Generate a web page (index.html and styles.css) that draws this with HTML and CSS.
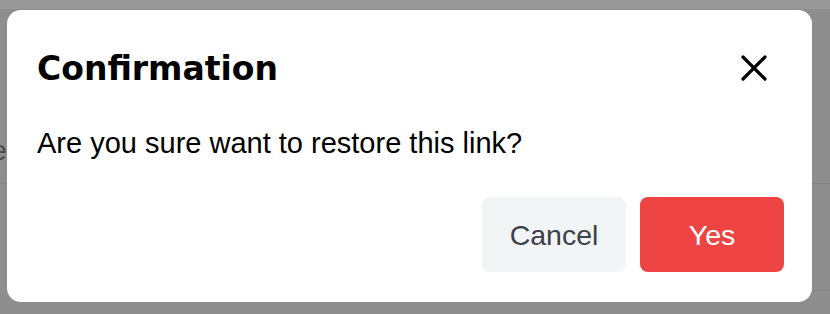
FILE: index.html
```html
<!DOCTYPE html>
<html>
<head>
<meta charset="utf-8">
<link rel="stylesheet" href="styles.css">
</head>
<body>
<div class="page">
  <div class="topbar"></div>
  <div class="bg-row">
    <span class="bg-text">Type</span>
  </div>
  <div class="bg-line line-1"></div>
  <div class="bg-line line-2"></div>
</div>
<div class="overlay">
  <div class="modal">
    <div class="modal-header">
      <h2 class="title">Confirmation</h2>
      <button class="close" aria-label="Close">
        <svg width="26" height="26" viewBox="0 0 26 26"><path d="M2 2 L24 24 M24 2 L2 24" stroke="#000" stroke-width="3.2" stroke-linecap="round" fill="none"/></svg>
      </button>
    </div>
    <p class="message">Are you sure want to restore this link?</p>
    <div class="actions">
      <button class="btn btn-cancel">Cancel</button>
      <button class="btn btn-yes">Yes</button>
    </div>
  </div>
</div>
</body>
</html>
```
FILE: styles.css
```css
html, body {
  margin: 0;
  padding: 0;
}
body {
  width: 830px;
  height: 314px;
  overflow: hidden;
  background: #8e8e8e;
  position: relative;
  font-family: "Liberation Sans", Arial, sans-serif;
}
.page {
  position: relative;
  width: 830px;
  height: 314px;
}
.topbar {
  height: 9px;
  background: #999999;
}
.bg-row {
  height: 174px;
  display: flex;
  align-items: center;
  padding-top: 110px;
  box-sizing: border-box;
}
.bg-text {
  font-size: 28px;
  color: #4a4a4a;
  margin-left: -54px;
}
.bg-line {
  position: absolute;
  left: 0;
  right: 0;
  height: 1px;
  background: #838383;
}
.line-1 { top: 183px; }
.line-2 { top: 290px; left: 812px; }
.overlay {
  position: absolute;
  inset: 0;
}
.modal {
  position: absolute;
  left: 7px;
  top: 10px;
  width: 805px;
  height: 292px;
  box-sizing: border-box;
  background: #ffffff;
  border-radius: 14px;
  padding: 30px 28px 30px 30px;
  display: flex;
  flex-direction: column;
}
.modal-header {
  display: flex;
  align-items: center;
  justify-content: space-between;
  height: 56px;
}
.title {
  margin: 0;
  font-family: "DejaVu Sans", sans-serif;
  font-weight: 700;
  font-size: 33px;
  color: #000;
  letter-spacing: 0;
}
.close {
  border: 0;
  background: none;
  padding: 0;
  width: 26px;
  height: 26px;
  margin-right: 17px;
  display: flex;
}
.message {
  margin: 30px 0 0;
  font-size: 29px;
  line-height: 34px;
  color: #000;
}
.actions {
  margin-top: auto;
  display: flex;
  justify-content: flex-end;
  gap: 14px;
}
.btn {
  width: 144px;
  height: 75px;
  border: 0;
  border-radius: 8px;
  font-family: "Liberation Sans", Arial, sans-serif;
  font-size: 28.5px;
  padding-top: 2px;
}
.btn-cancel {
  background: #f3f4f6;
  color: #3b414b;
}
.btn-yes {
  background: #ef4444;
  color: #ffffff;
}
```
